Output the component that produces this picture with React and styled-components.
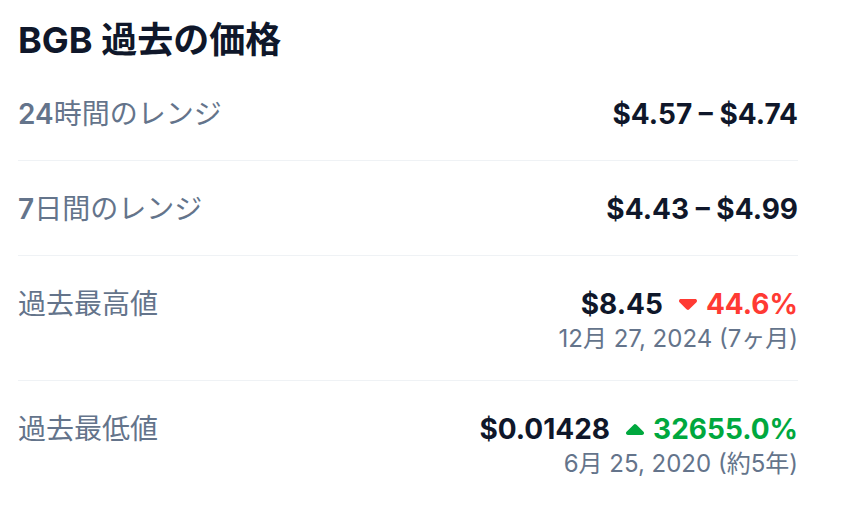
import React from "react";
import styled, { createGlobalStyle } from "styled-components";

const GlobalStyle = createGlobalStyle`
    body {
        margin: 0;
        background: #ffffff;
        font-family: Inter, "Noto Sans CJK JP", sans-serif;
    }
`;

const rows = [
    { num: "24", label: "時間のレンジ", value: "$4.57 – $4.74" },
    { num: "7", label: "日間のレンジ", value: "$4.43 – $4.99" },
    {
        label: "過去最高値",
        value: "$8.45",
        change: { dir: "down", text: "44.6%" },
        date: "12月 27, 2024 (7ヶ月)",
    },
    {
        label: "過去最低値",
        value: "$0.01428",
        change: { dir: "up", text: "32655.0%" },
        date: "6月 25, 2020 (約5年)",
    },
];

function Caret({ dir }) {
    return (
        <CaretSvg
            viewBox="0 192 320 192"
            $dir={dir}
            aria-hidden="true"
        >
            <path d="M137.4 374.6c12.5 12.5 32.8 12.5 45.3 0l128-128c9.2-9.2 11.9-22.9 6.9-34.9s-16.6-19.8-29.6-19.8L32 192c-12.9 0-24.6 7.8-29.6 19.8s-2.2 25.7 6.9 34.9l128 128z" />
        </CaretSvg>
    );
}

export default function App() {
    return (
        <Page>
            <GlobalStyle />
            <Title>BGB 過去の価格</Title>
            {rows.map((row) => (
                <Row key={row.label}>
                    <Label>
                        {row.num && <LabelNum>{row.num}</LabelNum>}
                        {row.label}
                    </Label>
                    <Right>
                        <ValueLine>
                            <Value>{row.value}</Value>
                            {row.change && (
                                <Change $dir={row.change.dir}>
                                    <Caret dir={row.change.dir} />
                                    {row.change.text}
                                </Change>
                            )}
                        </ValueLine>
                        {row.date && <DateText>{row.date}</DateText>}
                    </Right>
                </Row>
            ))}
        </Page>
    );
}

const Page = styled.div`
    width: 780px;
    padding: 18px 0 0 18px;
`;

const Title = styled.h2`
    margin: 0 0 4px;
    font-size: 36px;
    line-height: 44px;
    font-weight: 700;
    color: #0f172a;
`;

const Row = styled.div`
    display: flex;
    justify-content: space-between;
    align-items: flex-start;
    padding: 28px 0 26px;
    border-bottom: 1px solid #eff2f5;

    &:last-child {
        border-bottom: none;
    }
`;

const Label = styled.div`
    font-size: 28px;
    line-height: 40px;
    font-weight: 400;
    color: #64748b;
`;

const LabelNum = styled.span`
    font-weight: 600;
`;

const Right = styled.div`
    display: flex;
    flex-direction: column;
    align-items: flex-end;
`;

const ValueLine = styled.div`
    display: flex;
    align-items: center;
`;

const Value = styled.span`
    font-size: 28px;
    line-height: 40px;
    font-weight: 700;
    color: #0f172a;
`;

const Change = styled.span`
    display: flex;
    align-items: center;
    gap: 9px;
    margin-left: 16px;
    font-size: 28px;
    line-height: 40px;
    font-weight: 700;
    color: ${(p) => (p.$dir === "up" ? "#00a83e" : "#ff3a33")};
`;

const CaretSvg = styled.svg`
    width: 18px;
    height: 11px;
    fill: currentColor;
    transform: ${(p) => (p.$dir === "up" ? "rotate(180deg)" : "none")};
`;

const DateText = styled.div`
    font-size: 24px;
    line-height: 30px;
    font-weight: 400;
    color: #64748b;
`;
